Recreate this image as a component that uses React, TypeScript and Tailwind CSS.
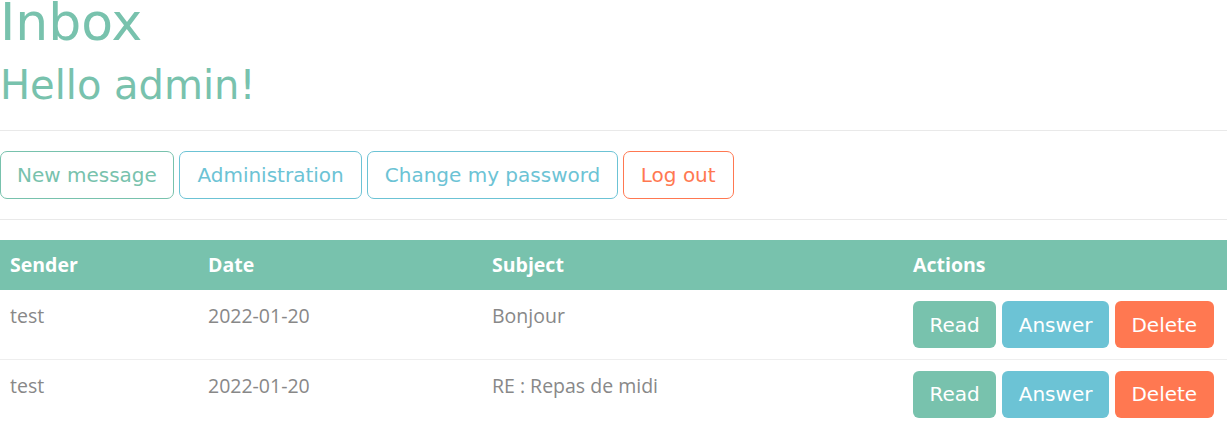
const heading = { fontFamily: '"DejaVu Sans", sans-serif' };

type Message = { sender: string; date: string; subject: string };

const messages: Message[] = [
  { sender: "test", date: "2022-01-20", subject: "Bonjour" },
  { sender: "test", date: "2022-01-20", subject: "RE : Repas de midi" },
];

function OutlineButton({
  label,
  tone,
  pad,
}: {
  label: string;
  tone: "primary" | "info" | "danger";
  pad: string;
}) {
  const cls =
    tone === "primary"
      ? "border-[#78c2ad] text-[#78c2ad]"
      : tone === "info"
        ? "border-[#6cc3d5] text-[#6cc3d5]"
        : "border-[#ff7851] text-[#ff7851]";
  return (
    <button
      className={`h-[48px] rounded-[7px] border bg-white text-[20px] leading-none ${pad} ${cls}`}
      style={heading}
    >
      {label}
    </button>
  );
}

function ActionButton({ label, bg }: { label: string; bg: string }) {
  return (
    <button
      className={`h-[47px] rounded-[6px] px-[16.5px] text-[20px] leading-none text-white ${bg}`}
      style={heading}
    >
      {label}
    </button>
  );
}

export default function App() {
  return (
    <div className="w-[1227px] h-[428px] overflow-hidden bg-white" style={{ fontFamily: '"Open Sans", sans-serif' }}>
      <div className="flex flex-col" style={heading}>
        <h1 className="h-[44px] text-[52px] leading-[44px] text-[#78c2ad]">Inbox</h1>
        <h2 className="mt-[18px] h-[46px] text-[40px] leading-[46px] text-[#78c2ad]">Hello admin!</h2>
      </div>

      <hr className="mt-[22px] border-t border-[#e9e9e9]" />

      <div className="mt-[20px] flex gap-[5px]">
        <OutlineButton label="New message" tone="primary" pad="px-[16px]" />
        <OutlineButton label="Administration" tone="info" pad="px-[17.5px]" />
        <OutlineButton label="Change my password" tone="info" pad="px-[16.5px]" />
        <OutlineButton label="Log out" tone="danger" pad="px-[17px]" />
      </div>

      <hr className="mt-[20px] border-t border-[#e9e9e9]" />

      <table className="mt-[20px] w-full border-collapse text-[19.5px] text-[#888]">
        <thead>
          <tr className="h-[50px] bg-[#78c2ad] text-left text-white">
            <th className="w-[198px] px-[10px] font-bold">Sender</th>
            <th className="w-[284px] px-[10px] font-bold">Date</th>
            <th className="w-[421px] px-[10px] font-bold">Subject</th>
            <th className="px-[10px] font-bold">Actions</th>
          </tr>
        </thead>
        <tbody>
          {messages.map((m, i) => (
            <tr key={i} className="h-[69px] border-t border-[#eee] align-top first:border-t-0">
              <td className="px-[10px] pt-[11px]">{m.sender}</td>
              <td className="px-[10px] pt-[11px]">{m.date}</td>
              <td className="px-[10px] pt-[11px]">{m.subject}</td>
              <td className="px-[10px] pt-[11px] pb-[10px]">
                <div className="flex gap-[6px]">
                  <ActionButton label="Read" bg="bg-[#78c2ad]" />
                  <ActionButton label="Answer" bg="bg-[#6cc3d5]" />
                  <ActionButton label="Delete" bg="bg-[#ff7851]" />
                </div>
              </td>
            </tr>
          ))}
        </tbody>
      </table>
    </div>
  );
}
